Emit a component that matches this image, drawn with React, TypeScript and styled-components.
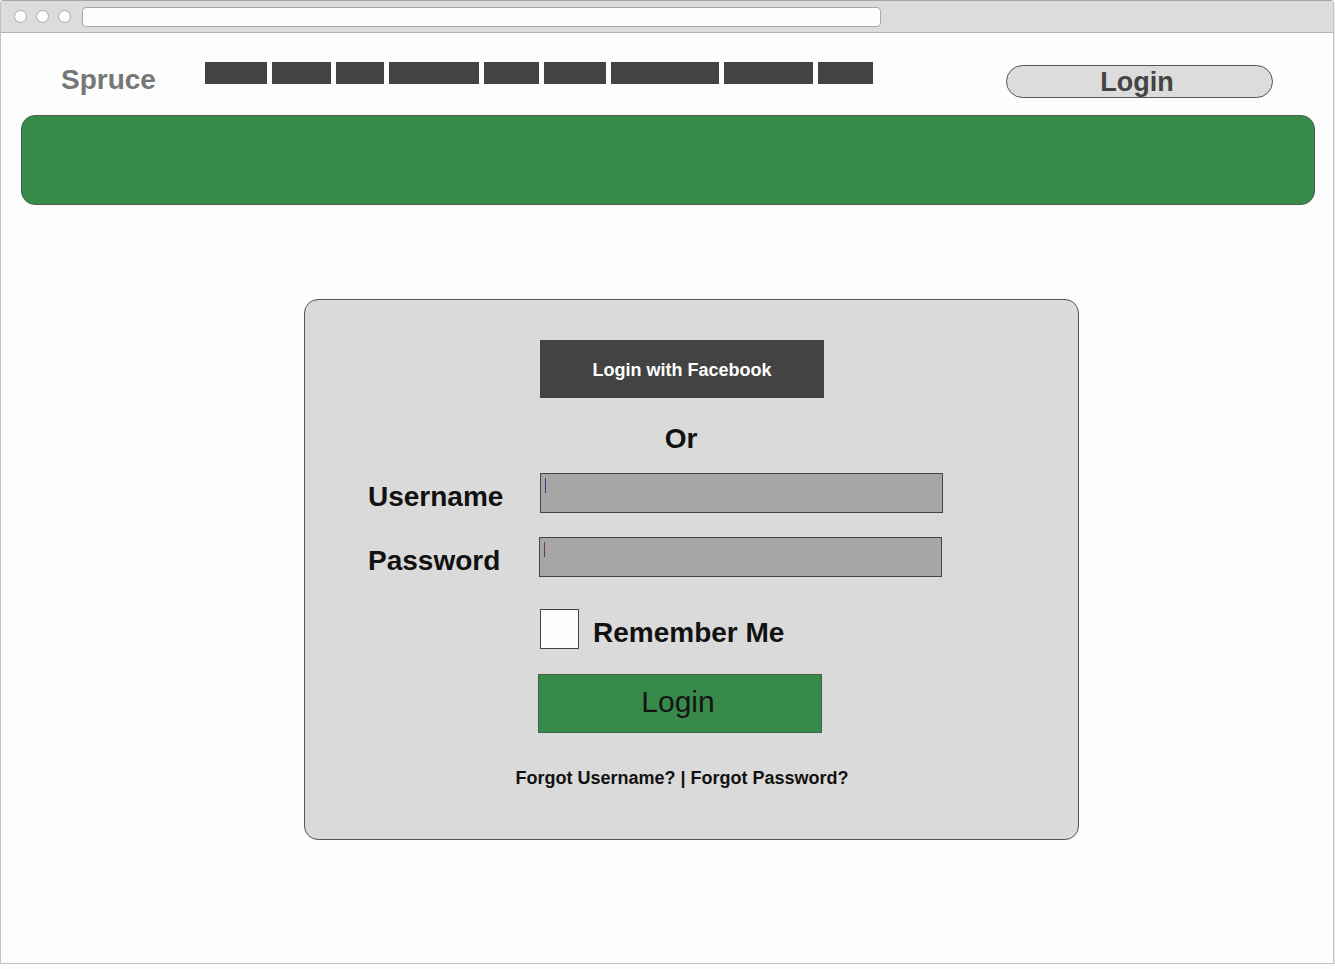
import React from "react";
import styled, { createGlobalStyle } from "styled-components";

const GlobalStyle = createGlobalStyle`
  html, body {
    margin: 0;
    padding: 0;
    background: #fdfdfd;
    font-family: "Liberation Sans", Arial, sans-serif;
  }
  * { box-sizing: border-box; }
`;

const Window = styled.div`
  width: 1334px;
  height: 964px;
  border: 1px solid #c2c2c2;
  border-top-color: #a4a4a4;
  border-radius: 4px 4px 0 0;
  background: #fdfdfd;
  box-shadow: 0 2px 5px rgba(0, 0, 0, 0.2);
  overflow: hidden;
  display: flex;
  flex-direction: column;
`;

const TitleBar = styled.div`
  height: 32px;
  flex: none;
  background: #dcdcdc;
  border-bottom: 1px solid #b4b4b4;
  display: flex;
  align-items: center;
  padding-left: 13px;
  gap: 9px;
`;

const Dot = styled.span`
  width: 13px;
  height: 13px;
  border-radius: 50%;
  background: #fdfdfd;
  border: 1px solid #aaaaaa;
`;

const AddressBar = styled.div`
  width: 799px;
  height: 20px;
  margin-left: 2px;
  background: #fdfdfd;
  border: 1px solid #a8a8a8;
  border-radius: 4px;
`;

const Header = styled.header`
  height: 82px;
  flex: none;
  display: flex;
  align-items: flex-start;
  padding: 29px 60px 0 60px;
`;

const Logo = styled.div`
  width: 144px;
  margin-top: 2px;
  font-size: 28px;
  line-height: 32px;
  font-weight: 700;
  color: #777777;
`;

const Nav = styled.nav`
  display: flex;
  gap: 5px;
`;

const NavBlock = styled.span<{ $w: number }>`
  display: block;
  width: ${(p) => p.$w}px;
  height: 22px;
  background: #434343;
`;

const PillButton = styled.button`
  margin-left: auto;
  margin-top: 3px;
  width: 267px;
  height: 33px;
  padding: 2px 5px 0 0;
  border: 1px solid #555555;
  border-radius: 17px;
  background: #dcdcdc;
  color: #444444;
  font-family: inherit;
  font-size: 27px;
  font-weight: 700;
  line-height: 29px;
  text-align: center;
`;

const Banner = styled.div`
  flex: none;
  margin-left: 20px;
  width: 1294px;
  height: 90px;
  background: #388a4b;
  border: 1px solid #4a604f;
  border-radius: 14px;
`;

const Card = styled.section`
  flex: none;
  margin-top: 94px;
  margin-left: 303px;
  width: 775px;
  height: 541px;
  background: #dadada;
  border: 1px solid #555555;
  border-radius: 14px;
  padding: 40px 0 0 63px;
  display: flex;
  flex-direction: column;
`;

const Row = styled.div<{ $indent?: boolean; $top?: number }>`
  display: flex;
  align-items: center;
  padding-left: ${(p) => (p.$indent ? 172 : 0)}px;
  margin-top: ${(p) => p.$top ?? 0}px;
`;

const FacebookButton = styled.button`
  width: 284px;
  height: 58px;
  padding: 2px 0 0 0;
  border: none;
  background: #434343;
  color: #ffffff;
  font-family: inherit;
  font-size: 18px;
  font-weight: 700;
`;

const OrText = styled.div`
  width: 282px;
  text-align: center;
  font-size: 28px;
  line-height: 32px;
  font-weight: 700;
  color: #111111;
`;

const Label = styled.label`
  width: 172px;
  padding-top: 8px;
  font-size: 28px;
  line-height: 32px;
  font-weight: 700;
  color: #111111;
`;

const Field = styled.div<{ $caret: string; $shift?: number }>`
  position: relative;
  width: 403px;
  height: 40px;
  margin-left: ${(p) => p.$shift ?? 0}px;
  background: #a6a6a6;
  border: 1px solid #444444;
  &::before {
    content: "";
    position: absolute;
    left: 4px;
    top: 4px;
    width: 1px;
    height: 15px;
    background: ${(p) => p.$caret};
  }
`;

const CheckBox = styled.span`
  display: block;
  width: 39px;
  height: 40px;
  background: #fdfdfd;
  border: 1px solid #444444;
`;

const CheckLabel = styled.span`
  margin-left: 14px;
  padding-top: 8px;
  font-size: 28px;
  line-height: 32px;
  font-weight: 700;
  color: #111111;
`;

const SubmitButton = styled.button`
  width: 284px;
  height: 59px;
  margin-left: -2px;
  padding: 0 4px 4px 0;
  background: #388a4b;
  border: 1px solid #3f6449;
  color: #141414;
  font-family: inherit;
  font-size: 30px;
  font-weight: 400;
`;

const LinksLine = styled.div`
  width: 284px;
  display: flex;
  justify-content: center;
  white-space: nowrap;
  font-size: 18px;
  line-height: 21px;
  font-weight: 700;
  color: #111111;
`;

const navWidths = [62, 59, 48, 90, 55, 62, 108, 89, 55];

export default function App() {
  return (
    <>
      <GlobalStyle />
      <Window>
        <TitleBar>
          <Dot />
          <Dot />
          <Dot />
          <AddressBar />
        </TitleBar>
        <Header>
          <Logo>Spruce</Logo>
          <Nav>
            {navWidths.map((w, i) => (
              <NavBlock key={i} $w={w} />
            ))}
          </Nav>
          <PillButton>Login</PillButton>
        </Header>
        <Banner />
        <Card>
          <Row $indent>
            <FacebookButton>Login with Facebook</FacebookButton>
          </Row>
          <Row $indent $top={25}>
            <OrText>Or</OrText>
          </Row>
          <Row $top={18}>
            <Label>Username</Label>
            <Field $caret="#3a3f78" />
          </Row>
          <Row $top={24}>
            <Label>Password</Label>
            <Field $caret="#6a3a55" $shift={-1} />
          </Row>
          <Row $indent $top={32}>
            <CheckBox />
            <CheckLabel>Remember Me</CheckLabel>
          </Row>
          <Row $indent $top={25}>
            <SubmitButton>Login</SubmitButton>
          </Row>
          <Row $indent $top={35}>
            <LinksLine>Forgot Username? | Forgot Password?</LinksLine>
          </Row>
        </Card>
      </Window>
    </>
  );
}
